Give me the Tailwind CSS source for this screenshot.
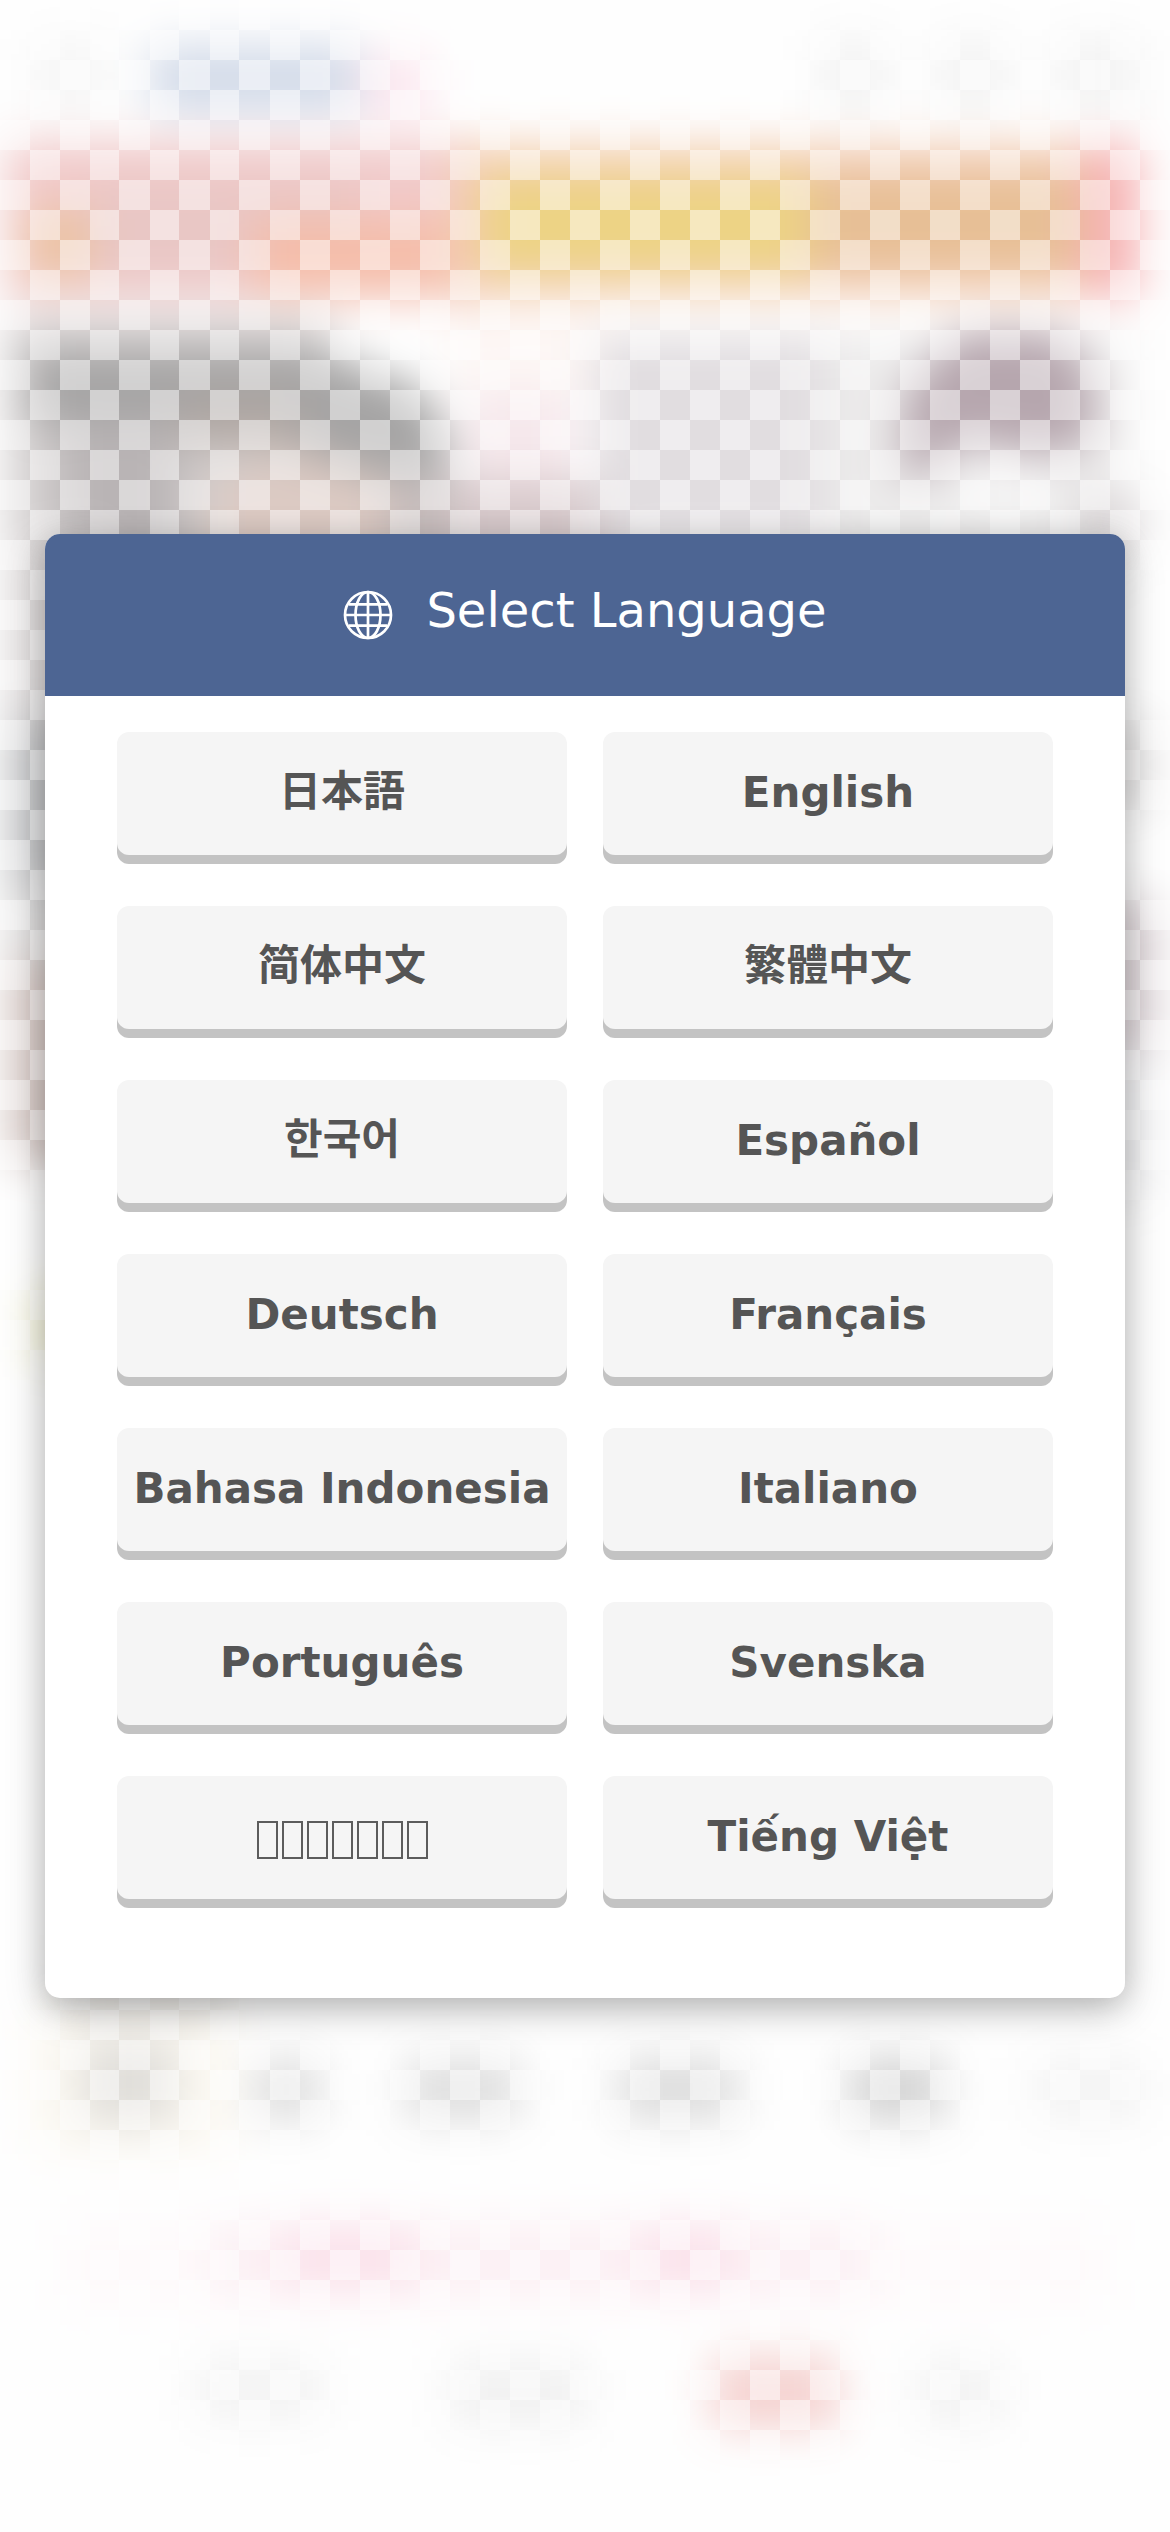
<!DOCTYPE html>
<html lang="en">
<head>
<meta charset="utf-8">
<title>Select Language</title>
<script src="https://cdn.jsdelivr.net/npm/@tailwindcss/browser@4"></script>
</head>
<body class="bg-white">
<div class="relative flex h-[2532px] w-[1170px] flex-col overflow-hidden bg-white px-[45px] pt-[534px]" style="font-family:'DejaVu Sans','Noto Sans CJK JP',sans-serif">
  <!-- Mosaic backdrop, one unit per 30px tile -->
  <svg class="absolute inset-0 h-[2532px] w-[1170px]" viewBox="0 0 39 84.4" aria-hidden="true">
    <defs>
      <filter id="soft" filterUnits="userSpaceOnUse" x="-3" y="-3" width="45" height="91" color-interpolation-filters="sRGB"><feGaussianBlur stdDeviation=".75"/></filter>
      <pattern id="tiles" width="2" height="2" patternUnits="userSpaceOnUse"><path d="M0 0h1v1H0zM1 1h1v1H1z" fill="#fff" fill-opacity=".48"/></pattern>
    </defs>
    <g filter="url(#soft)">
      <rect x="-3" y="-3" width="45" height="91" fill="#fefefe"/>
      <!-- status line -->
      <rect x="1" y="1.3" width="2.7" height="2.4" fill="#f6f6f6"/>
      <rect x="5" y="1.5" width="7" height="2.3" fill="#d3dbe9"/>
      <rect x="12" y="1.8" width="2.4" height="2.1" fill="#fce7ef"/>
      <g fill="#f3f3f3"><rect x="27.3" y="1.2" width="2.3" height="2.6"/><rect x="31.2" y="1.2" width="2.4" height="2.6"/><rect x="35.2" y="1.2" width="2.8" height="2.6"/></g>
      <!-- warm band -->
      <rect x=".2" y="4.7" width="16" height="5.3" fill="#f1caca"/>
      <rect x="3" y="6" width="9" height="3.3" fill="#e9c7c5"/>
      <rect x="1" y="7" width="2" height="2.2" fill="#ebc3a0"/>
      <rect x="8.4" y="7.3" width="7.6" height="2.5" fill="#f5bda9"/>
      <rect x="15" y="4.8" width="21" height="5.1" fill="#f4ceb8"/>
      <rect x="16" y="5.8" width="11" height="3.3" fill="#edd384"/>
      <rect x="27" y="5.8" width="9" height="3.2" fill="#e7bf95"/>
      <rect x="36" y="4.8" width="2" height="5.1" fill="#f6b3b4"/>
      <!-- dark arc on the left -->
      <rect x=".3" y="10.6" width="10.7" height="9" fill="#d2cece"/>
      <path d="M1 11.7h9.6l3.4 1.2 1 1.7v1.3h-3.5l-2-1.2-2-.6H1z" fill="#a5a4a4"/>
      <path d="M2 14h4v5H2z" fill="#b9b4b5"/>
      <path d="M6 13.3h4v1.5H6z" fill="#b0a6a1"/>
      <path d="M7 16l3-1 3 1v3H7z" fill="#dccac3"/>
      <path d="M13 16h2v3h-2z" fill="#c4baba"/>
      <!-- pale centre -->
      <rect x="15" y="10" width="5" height="3" fill="#fdf7f5"/>
      <rect x="15.5" y="13" width="3.6" height="3.2" fill="#f6e8ec"/>
      <rect x="15" y="16" width="5.8" height="3" fill="#d6c8ca"/>
      <rect x="19.8" y="11.2" width="8" height="7" fill="#e1dde0"/>
      <rect x="27.5" y="11.2" width="10" height="8" fill="#ecebeb"/>
      <path d="M30 15.8l.2-2.8 1.8-2h3.3l1 1.2.3 2.1-.8.8h-2l-1-.4-1 .2-.7.9z" fill="#b6a6ae"/>
      <rect x="32" y="15.6" width="3" height="1.2" fill="#f9f9f9"/>
      <rect x="36" y="16.7" width="2" height="1.4" fill="#d3cdcf"/>
      <!-- left margin -->
      <rect x=".3" y="18" width="3" height="6" fill="#dcd8d8"/>
      <rect x=".3" y="24" width="3" height="5.5" fill="#bebfc1"/>
      <rect x=".3" y="29.5" width="3" height="2.5" fill="#dad9d9"/>
      <rect x=".3" y="32" width="3" height="6.8" fill="#d3c5c1"/>
      <rect x="1" y="43" width="2" height="2.4" fill="#f0efd0"/>
      <!-- right margin -->
      <rect x="36.5" y="24" width="1.8" height="3" fill="#dfdddd"/>
      <rect x="36.5" y="30" width="2" height="5" fill="#d7cdd1"/>
      <rect x="36.5" y="35" width="1.8" height="5" fill="#ebebed"/>
      <!-- lower rows -->
      <rect x="2.4" y="65" width="5" height="2.3" fill="#e8e6e4"/>
      <rect x="1" y="67" width="6.8" height="4.8" fill="#fcf9f2"/>
      <rect x="2.7" y="68" width="3.2" height="2.8" fill="#e0deda"/>
      <rect x="8.4" y="68.6" width="2.3" height="2.1" fill="#dedede"/>
      <rect x="13.5" y="68.6" width="3.8" height="2.1" fill="#dedede"/>
      <rect x="20.6" y="68.6" width="4" height="2.1" fill="#dcdcdc"/>
      <rect x="28.3" y="68.6" width="3.2" height="2.1" fill="#d2d2d2"/>
      <rect x="34.4" y="68.6" width="3.8" height="2.1" fill="#f3f3f3"/>
      <rect x="2" y="74" width="35" height="3" fill="#fefafb"/>
      <rect x="7" y="74.1" width="22" height="2.4" fill="#fcf0f4"/>
      <rect x="9.4" y="74.1" width="4.4" height="2.2" fill="#fbe2eb"/>
      <rect x="21.4" y="74.1" width="3" height="2.2" fill="#fbe2eb"/>
      <rect x="6.5" y="78.6" width="4.3" height="2.1" fill="#f3f3f3"/>
      <rect x="15" y="78.6" width="4.6" height="2.3" fill="#f1f1f1"/>
      <rect x="23.7" y="78.5" width="4.3" height="2.5" fill="#f5d3d1"/>
      <rect x="30.5" y="78.6" width="3" height="2.3" fill="#f3f3f3"/>
    </g>
    <rect width="39" height="84.4" fill="url(#tiles)"/>
  </svg>

  <section class="relative flex h-[1464px] flex-col overflow-visible rounded-[15px] bg-white shadow-[0_12px_42px_rgba(0,0,0,0.2),0_6px_30px_rgba(0,0,0,0.15)]">
    <header class="flex h-[162px] items-center justify-center rounded-t-[15px] bg-[#4d6593] pb-[10px] text-white">
      <svg class="mt-[9px] mr-[33px] h-[50px] w-[50px]" viewBox="0 0 50 50" fill="none" stroke="currentColor" stroke-width="2.7">
        <circle cx="25" cy="25" r="23"/>
        <ellipse cx="25" cy="25" rx="12.5" ry="23"/>
        <path d="M25 2v46M2 25h46M6 14.3h38M6 35.7h38"/>
      </svg>
      <h1 class="text-[48px] leading-none">Select Language</h1>
    </header>
    <div class="grid grid-cols-2 gap-x-[36px] gap-y-[51px] px-[72px] pt-[36px] text-[42px] font-bold leading-none text-[#555]">
      <button class="flex h-[123px] items-center justify-center rounded-[12px] bg-[#f5f5f5] pb-[4px] shadow-[0_9px_0_#c3c3c3]" lang="ja">日本語</button>
      <button class="flex h-[123px] items-center justify-center rounded-[12px] bg-[#f5f5f5] pb-[2px] shadow-[0_9px_0_#c3c3c3]">English</button>
      <button class="flex h-[123px] items-center justify-center rounded-[12px] bg-[#f5f5f5] pb-[4px] shadow-[0_9px_0_#c3c3c3]">简体中文</button>
      <button class="flex h-[123px] items-center justify-center rounded-[12px] bg-[#f5f5f5] pb-[4px] shadow-[0_9px_0_#c3c3c3]">繁體中文</button>
      <button class="flex h-[123px] items-center justify-center rounded-[12px] bg-[#f5f5f5] pb-[4px] shadow-[0_9px_0_#c3c3c3]">한국어</button>
      <button class="flex h-[123px] items-center justify-center rounded-[12px] bg-[#f5f5f5] pb-[2px] shadow-[0_9px_0_#c3c3c3]">Español</button>
      <button class="flex h-[123px] items-center justify-center rounded-[12px] bg-[#f5f5f5] pb-[2px] shadow-[0_9px_0_#c3c3c3]">Deutsch</button>
      <button class="flex h-[123px] items-center justify-center rounded-[12px] bg-[#f5f5f5] pb-[2px] shadow-[0_9px_0_#c3c3c3]">Français</button>
      <button class="flex h-[123px] items-center justify-center rounded-[12px] bg-[#f5f5f5] pb-[2px] whitespace-nowrap shadow-[0_9px_0_#c3c3c3]">Bahasa Indonesia</button>
      <button class="flex h-[123px] items-center justify-center rounded-[12px] bg-[#f5f5f5] pb-[2px] shadow-[0_9px_0_#c3c3c3]">Italiano</button>
      <button class="flex h-[123px] items-center justify-center rounded-[12px] bg-[#f5f5f5] pb-[2px] shadow-[0_9px_0_#c3c3c3]">Português</button>
      <button class="flex h-[123px] items-center justify-center rounded-[12px] bg-[#f5f5f5] pb-[2px] shadow-[0_9px_0_#c3c3c3]">Svenska</button>
      <button class="flex h-[123px] items-center justify-center gap-[4px] rounded-[12px] bg-[#f5f5f5] pt-[5px] shadow-[0_9px_0_#c3c3c3]">
        <span class="h-[38px] w-[21px] border-2 border-[#5c5c5c]"></span>
        <span class="h-[38px] w-[21px] border-2 border-[#5c5c5c]"></span>
        <span class="h-[38px] w-[21px] border-2 border-[#5c5c5c]"></span>
        <span class="h-[38px] w-[21px] border-2 border-[#5c5c5c]"></span>
        <span class="h-[38px] w-[21px] border-2 border-[#5c5c5c]"></span>
        <span class="h-[38px] w-[21px] border-2 border-[#5c5c5c]"></span>
        <span class="h-[38px] w-[21px] border-2 border-[#5c5c5c]"></span>
      </button>
      <button class="flex h-[123px] items-center justify-center rounded-[12px] bg-[#f5f5f5] pb-[2px] shadow-[0_9px_0_#c3c3c3]">Tiếng Việt</button>
    </div>
  </section>
</div>
</body>
</html>
